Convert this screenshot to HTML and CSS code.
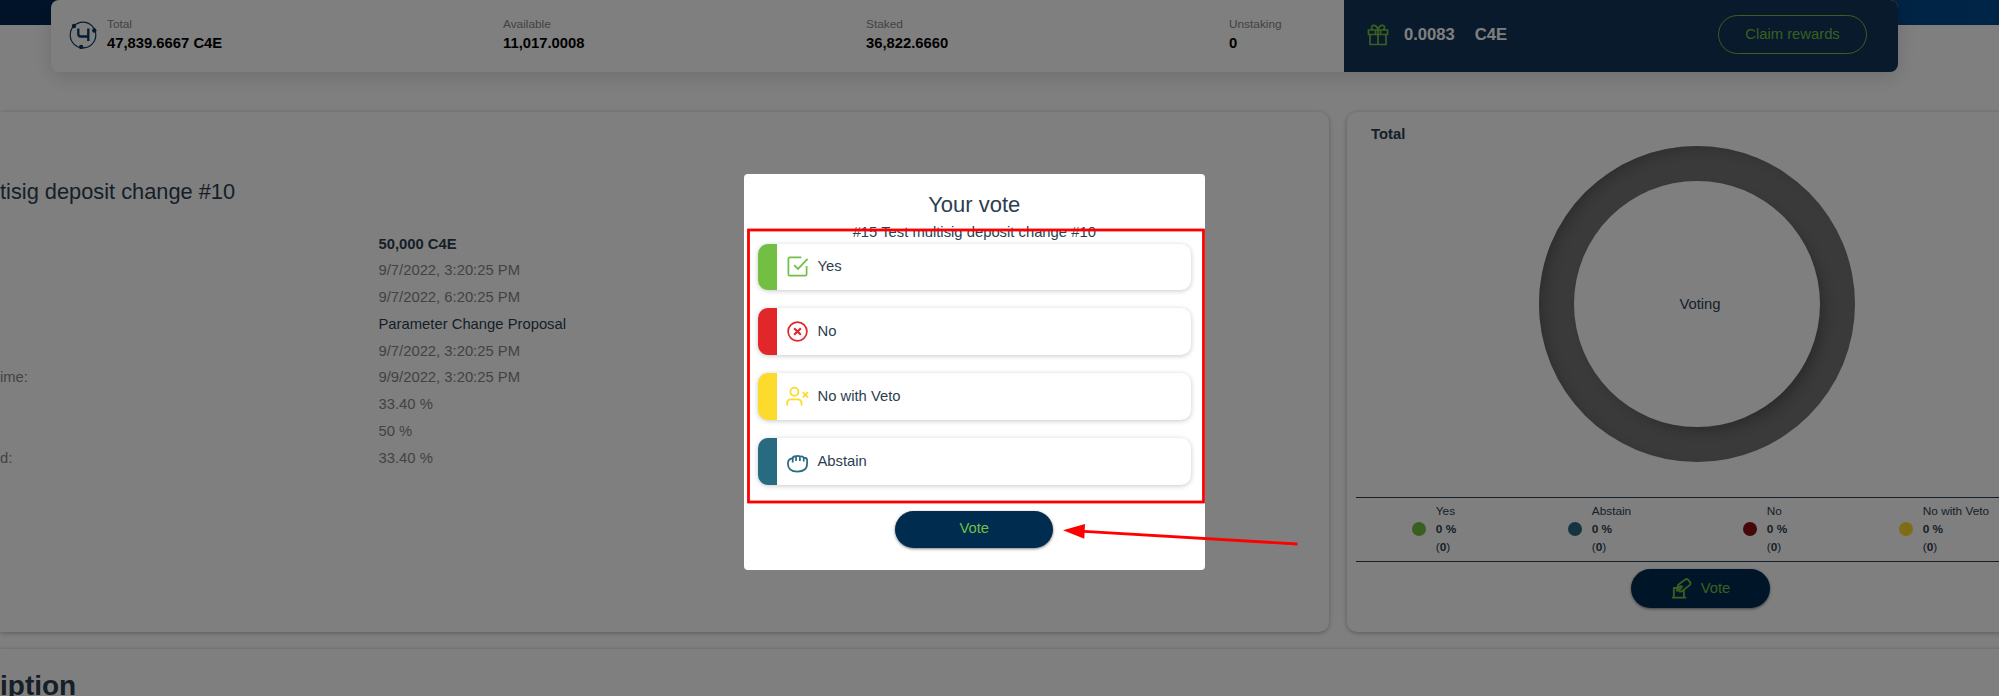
FILE: index.html
```html
<!DOCTYPE html>
<html lang="en">
<head>
<meta charset="utf-8">
<title>Your vote</title>
<link rel="stylesheet" href="styles.css">
</head>
<body>
<div class="page">
  <header class="band">
    <section class="wallet">
      <div class="balances">
        <svg class="logo" viewBox="0 0 28 28" fill="none" stroke="#0b3a66"><circle cx="14" cy="14" r="12.8" stroke-width="1.2"/><path d="M9.300 7.500v5.500q0 2.500 2.500 2.500h7.500M19.300 7.500v12.500" stroke-width="2.300"/><g fill="#0b3a66" stroke="none"><circle cx="5" cy="5" r="2.200"/><circle cx="25.300" cy="9.500" r="2.200"/><circle cx="12.200" cy="26" r="2.200"/></g></svg>
        <div class="balance"><span class="label">Total</span><b>47,839.6667 C4E</b></div>
        <div class="balance"><span class="label">Available</span><b>11,017.0008</b></div>
        <div class="balance"><span class="label">Staked</span><b>36,822.6660</b></div>
        <div class="balance"><span class="label">Unstaking</span><b>0</b></div>
      </div>
      <div class="rewards">
        <svg class="gift" viewBox="0 0 22 22" fill="none" stroke="#72bf44" stroke-width="1.700"><path d="M1.500 6h19v4.500h-19zM3 10.500h16v10H3zM11 6v14.500M11 6C10 0.500 4.500 0 4.500 3.500 4.500 5 5.500 6 7 6M11 6c1-5.500 6.500-6 6.500-2.500C17.500 5 16.500 6 15 6M8.500 6v4.500M13.500 6v4.500"/></svg>
        <b class="amount">0.0083</b><b>C4E</b>
        <button class="claim">Claim rewards</button>
      </div>
    </section>
  </header>
  <main class="content">
    <section class="card details">
      <h2>tisig deposit change #10</h2>
      <dl class="facts">
        <dt></dt><dd class="strong">50,000 C4E</dd>
        <dt></dt><dd>9/7/2022, 3:20:25 PM</dd>
        <dt></dt><dd>9/7/2022, 6:20:25 PM</dd>
        <dt></dt><dd class="dark">Parameter Change Proposal</dd>
        <dt></dt><dd>9/7/2022, 3:20:25 PM</dd>
        <dt>ime:</dt><dd>9/9/2022, 3:20:25 PM</dd>
        <dt></dt><dd>33.40 %</dd>
        <dt></dt><dd>50 %</dd>
        <dt>d:</dt><dd>33.40 %</dd>
      </dl>
    </section>
    <section class="card tally">
      <h3>Total</h3>
      <div class="ring"><div class="hole">Voting</div></div>
      <div class="legend">
        <div class="item"><i class="dot green"></i><div>Yes<br><b>0 %</b><br>(<b>0</b>)</div></div>
        <div class="item"><i class="dot teal"></i><div>Abstain<br><b>0 %</b><br>(<b>0</b>)</div></div>
        <div class="item"><i class="dot maroon"></i><div>No<br><b>0 %</b><br>(<b>0</b>)</div></div>
        <div class="item"><i class="dot yellow"></i><div>No with Veto<br><b>0 %</b><br>(<b>0</b>)</div></div>
      </div>
      <button class="pill open-vote"><svg viewBox="0 0 22 22" fill="none" stroke="#72bf44" stroke-width="1.900"><path d="M1 20.500h15M3 20.500v-10h3M13.500 20.500v-8M6 14l1.500-7L15 1.500q1.500-1 3 .5l2 2.500q1 1.500-.5 3L11 14q-2 1-2.500-1l3-4q-2-1-3.500 1z"/></svg>Vote</button>
    </section>
    <section class="card description"><h1>iption</h1></section>
  </main>
</div>
<div class="overlay">
  <div class="modal">
    <h2>Your vote</h2>
    <p>#15 Test multisig deposit change #10</p>
    <div class="options">
      <div class="option green"><svg viewBox="0 0 24 24" fill="none" stroke="#72bf44" stroke-width="1.800"><path d="M16 2.500H4Q2.500 2.500 2.500 4v16Q2.500 21.500 4 21.500h16q1.500 0 1.500-1.500V11.500M8.500 10.500l4 4L22.500 4"/></svg>Yes</div>
      <div class="option red"><svg viewBox="0 0 24 24" fill="none" stroke="#e12729" stroke-width="1.800"><circle cx="12" cy="12" r="9.800"/><path d="M8.500 8.500l7 7M15.500 8.500l-7 7" stroke-width="2.200"/></svg>No</div>
      <div class="option yellow"><svg viewBox="0 0 24 24" fill="none" stroke="#fddb2c" stroke-width="1.900"><circle cx="8.800" cy="7" r="4.200"/><path d="M1.200 21.500v-2.500Q1.200 15 5.200 15h7q4 0 4 4v2.500M17.500 7.500l5.500 5.500M23 7.500l-5.500 5.500"/></svg>No with Veto</div>
      <div class="option teal"><svg viewBox="0 0 24 24" fill="none" stroke="#286b80" stroke-width="1.800"><path d="M7 13V8.500Q2 9.500 2 14q0 8.500 10 8.500T22 14v-3.500Q22 8 18.500 8v4M7 9q0-2.500 3.500-2.500v5M10.500 6.800q2-1.500 4 0v4.700M14.500 7q3.500-1 4 1.500"/></svg>Abstain</div>
    </div>
    <button class="pill submit">Vote</button>
  </div>
</div>
<svg class="annotations" viewBox="0 0 1999 696" fill="none" stroke="#f00"><rect x="748.500" y="230" width="455" height="272" stroke-width="2.800"/><path d="M1084 531.300L1297.500 544" stroke-width="2.800"/><path d="M1063 530.300l22-6.300-.7 14.700z" fill="#f00" stroke="none"/></svg>
</body>
</html>
```
FILE: styles.css
```css
* { box-sizing: border-box; }
body { margin: 0; overflow: hidden; background: #fff; color: #2c3e50; font: 14.8px/1.2 "Liberation Sans", Arial, sans-serif; }
h1, h2, h3, p, dl, dd { margin: 0; }
button { font: inherit; color: #72bf44; display: flex; align-items: center; justify-content: center; }
.page { width: 1999px; height: 696px; overflow: hidden; }
.band { height: 25px; padding-left: 51px; background: linear-gradient(90deg, #002652, #004a8c); }
.wallet { display: flex; width: 1847px; height: 72px; border-radius: 8px; background: #fff; box-shadow: 0 5px 20px rgba(0,0,0,.14); }
.balances { width: 1293px; padding: 0 0 0 18px; display: grid; grid-template-columns: 38px 396px 363px 363px 1fr; align-items: start; }
.logo { width: 28px; height: 28px; margin-top: 21px; }
.balance { display: flex; flex-direction: column; padding-top: 15px; line-height: 20px; color: #000; }
.label { font-size: 11.84px; line-height: 18px; color: #858585; }
.rewards { flex: 1; display: flex; align-items: center; padding: 0 31px 3px 23px; border-radius: 0 8px 8px 0; background: #103456; color: #fff; font-size: 16.6px; }
.gift { width: 22px; height: 22px; margin: 0 15px 0 0; }
.amount { margin-right: 20px; }
.claim { margin-left: auto; width: 149px; height: 39px; border: 1px solid #72bf44; border-radius: 20px; background: none; font-size: 14.8px; }
.content { display: grid; grid-template-columns: 1329px 707px; grid-template-rows: 520px 120px; gap: 17px 18px; padding-top: 87px; }
.card { border-radius: 10px; background: #fff; box-shadow: 0 1px 5px rgba(0,0,0,.3); }
.details { border-radius: 0 10px 10px 0; padding-top: 67px; }
h2 { font-size: 22px; font-weight: 400; line-height: 26px; }
.details h2 { font-size: 21.8px; }
.facts { display: grid; grid-template-columns: 378.500px 1fr; grid-auto-rows: 26.800px; line-height: 26.800px; margin-top: 25.500px; color: #858585; }
.strong { font-weight: 700; color: #2c3e50; }
.dark { color: #2c3e50; }
.tally { display: flex; flex-direction: column; align-items: center; padding: 12px 9px 0; }
.tally h3 { align-self: flex-start; margin-left: 15px; font-size: 14.8px; line-height: 20px; }
.ring { width: 316px; height: 316px; padding: 35px; margin: 2px 7px 0 0; border-radius: 50%; background: #757575; box-shadow: inset 8px 5px 16px -6px #555; }
.hole { height: 246px; border-radius: 50%; background: #fff; display: flex; align-items: center; justify-content: center; padding: 2px 0 0 6px; box-shadow: 7px 7px 16px -5px #505050; }
.legend { align-self: stretch; display: flex; justify-content: space-around; margin-top: 35px; height: 65px; padding-top: 4px; border: solid #2c3e50; border-width: 1px 0; font-size: 11.84px; line-height: 18px; }
.item { display: flex; align-items: center; gap: 10px; height: 54px; }
.dot { width: 14px; height: 14px; border-radius: 50%; }
.dot.green { background: #72bf44; }
.dot.teal { background: #286b80; }
.dot.maroon { background: #8b0f14; }
.dot.yellow { background: #fddb2c; }
.pill { border: 0; border-radius: 20px; background: #002c50; box-shadow: 0 1px 3px rgba(0,0,0,.5); }
.open-vote { width: 139px; height: 39px; margin-top: 7px; gap: 9px; }
.open-vote svg { width: 21px; height: 21px; }
.description { grid-column: 1 / 3; border-radius: 0; padding-top: 20px; }
h1 { font-size: 28px; line-height: 34px; }
.overlay { position: fixed; inset: 0; background: rgba(0,0,0,.5); padding: 173.500px 0 0 743.500px; }
.modal { width: 461.500px; height: 396.500px; padding: 18px 14px 0; display: flex; flex-direction: column; align-items: center; border-radius: 4px; background: #fff; }
.modal p { line-height: 18px; margin-top: 5px; }
.options { align-self: stretch; display: grid; gap: 18.700px; margin-top: 3px; }
.option { display: flex; align-items: center; gap: 9px; height: 46.300px; padding-left: 9px; border-left: 19px solid; border-radius: 10px; box-shadow: 0 1px 5px rgba(0,0,0,.22); background: #fff; color: #2c3e50; }
.option svg { width: 23px; height: 23px; }
.option.green { border-left-color: #72bf44; }
.option.red { border-left-color: #e12729; }
.option.yellow { border-left-color: #fddb2c; }
.option.teal { border-left-color: #286b80; }
.submit { width: 158px; height: 37px; margin-top: 26px; }
.annotations { position: fixed; inset: 0; width: 1999px; height: 696px; }
```
